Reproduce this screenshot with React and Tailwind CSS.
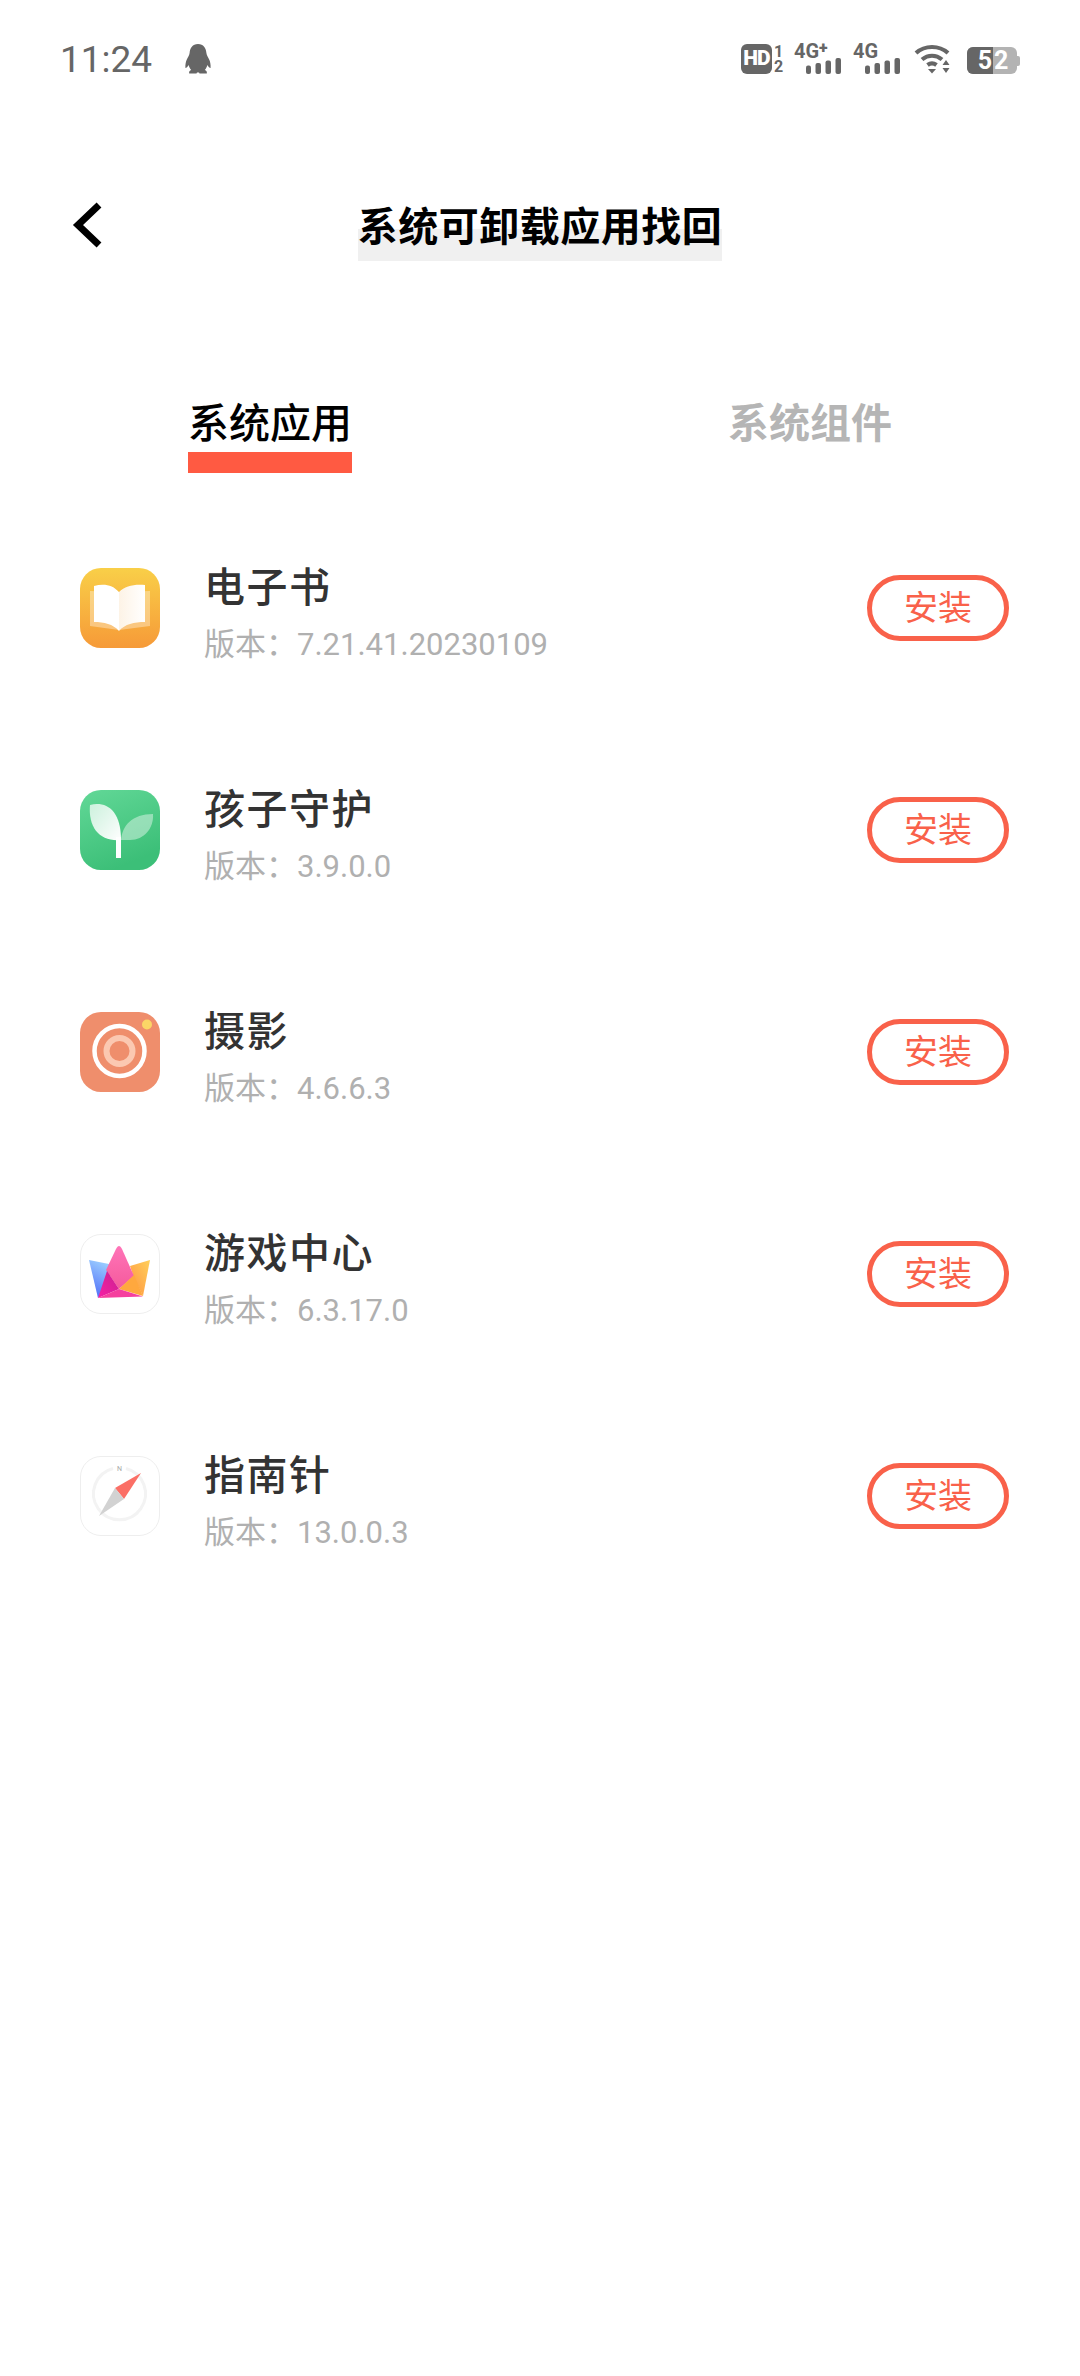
const apps = [
  { name: "电子书", version: "7.21.41.20230109", icon: BookIcon },
  { name: "孩子守护", version: "3.9.0.0", icon: SproutIcon },
  { name: "摄影", version: "4.6.6.3", icon: CameraIcon },
  { name: "游戏中心", version: "6.3.17.0", icon: CrownIcon },
  { name: "指南针", version: "13.0.0.3", icon: CompassIcon },
];

function BookIcon() {
  return (
    <svg viewBox="0 0 80 80" className="h-20 w-20">
      <defs>
        <linearGradient id="bookBg" x1="0" y1="0" x2="0" y2="1">
          <stop offset="0" stopColor="#f9cf48" />
          <stop offset="1" stopColor="#f69a38" />
        </linearGradient>
        <linearGradient id="bookPage" x1="0" y1="0" x2="1" y2="0">
          <stop offset="0" stopColor="#fdf3e6" />
          <stop offset="1" stopColor="#ffffff" />
        </linearGradient>
      </defs>
      <rect width="80" height="80" rx="21" fill="url(#bookBg)" />
      <path d="M10 23 L39 24 L39 62 L10 58 Z M70 23 L39 24 L39 62 L70 58 Z" fill="#fff" opacity=".35" />
      <path d="M14 18 C24 15 33 17 39 24 L39 63 C33 56 24 54 14 54 Z" fill="#fff" />
      <path d="M65 17 C54 16 45 18 39 24 L39 63 C45 56 54 54 65 54 Z" fill="url(#bookPage)" />
    </svg>
  );
}

function SproutIcon() {
  return (
    <svg viewBox="0 0 80 80" className="h-20 w-20">
      <defs>
        <linearGradient id="sproutBg" x1="0" y1="0" x2="0.4" y2="1">
          <stop offset="0" stopColor="#62d897" />
          <stop offset="1" stopColor="#3cbf78" />
        </linearGradient>
        <linearGradient id="sproutLeaf" x1="1" y1="1" x2="0" y2="0">
          <stop offset="0" stopColor="#fff" />
          <stop offset="1" stopColor="#fff" stopOpacity=".7" />
        </linearGradient>
      </defs>
      <rect width="80" height="80" rx="21" fill="url(#sproutBg)" />
      <path d="M41 50 C42 36 52 24 73 24 C74 38 64 50 50 50 Z" fill="#fff" opacity=".42" />
      <path d="M10 15 C26 11 41 20 41 50 C20 52 8 38 10 15 Z" fill="url(#sproutLeaf)" />
      <rect x="36" y="47" width="5" height="21" fill="#fff" />
    </svg>
  );
}

function CameraIcon() {
  return (
    <svg viewBox="0 0 80 80" className="h-20 w-20">
      <rect width="80" height="80" rx="21" fill="#ef8e6c" />
      <circle cx="39.5" cy="39" r="25" fill="none" stroke="#fff" strokeWidth="4.5" />
      <circle cx="39.5" cy="39" r="13" fill="none" stroke="#fbc8b1" strokeWidth="6" />
      <circle cx="67" cy="12.5" r="5" fill="#fbd666" />
    </svg>
  );
}

function CrownIcon() {
  return (
    <svg viewBox="0 0 80 80" className="h-20 w-20">
      <defs>
        <linearGradient id="crownBlue" x1="0.6" y1="0" x2="0.3" y2="1">
          <stop offset="0" stopColor="#9ccfff" />
          <stop offset="1" stopColor="#4f6cf8" />
        </linearGradient>
        <linearGradient id="crownOrange" x1="1" y1="0" x2="0" y2="1">
          <stop offset="0" stopColor="#ffd05a" />
          <stop offset="1" stopColor="#ff9340" />
        </linearGradient>
        <linearGradient id="crownPink" x1="0.5" y1="0" x2="0.5" y2="1">
          <stop offset="0" stopColor="#ff74b8" />
          <stop offset="1" stopColor="#f55a9c" />
        </linearGradient>
        <linearGradient id="crownMag" x1="0" y1="1" x2="1" y2="0">
          <stop offset="0" stopColor="#f81fa5" />
          <stop offset="1" stopColor="#c9218f" />
        </linearGradient>
      </defs>
      <rect x="0.5" y="0.5" width="79" height="79" rx="20.5" fill="#fff" stroke="#eeeeee" />
      <path d="M9 26 L29 30 L30 42 L18 64 Z" fill="url(#crownBlue)" />
      <path d="M70 26 L50 32 L54 44 L63 62 Z" fill="url(#crownOrange)" />
      <path d="M39 12 C40 12 41 13 42 15 L54 42 L39 55 L26 36 L36 15 C37 13 38 12 39 12 Z" fill="url(#crownPink)" />
      <path d="M27 37 L39 55 L18 64 Z" fill="url(#crownMag)" />
      <path d="M54 41 L63 62 L39 55 Z" fill="#ffa83e" />
      <path d="M18 64 L39 55 L63 62.5 Z" fill="#f5409e" />
    </svg>
  );
}

function CompassIcon() {
  return (
    <svg viewBox="0 0 80 80" className="h-20 w-20">
      <rect x="0.5" y="0.5" width="79" height="79" rx="20.5" fill="#fff" stroke="#eeeeee" />
      <path d="M33 12.5 A26 26 0 1 0 46 12.5" fill="none" stroke="#f3f3f3" strokeWidth="3" />
      <text x="39.5" y="15" textAnchor="middle" fontSize="7" fill="#a8a8a8" fontFamily="Roboto">N</text>
      <path d="M61 17 L35 32 L44 43 Z" fill="#fb6f66" />
      <path d="M35 32 L44 43 L19 60 Z" fill="#d2d2d2" />
    </svg>
  );
}

function Penguin() {
  return (
    <svg viewBox="0 0 26 30" className="h-[30px] w-[26px]" fill="#666">
      <path d="M13 0 C7.5 0 5 4.2 4.6 9 C4.4 11.5 2.6 13.5 1.6 16 C0.8 18 0.2 20.5 0.4 24 C1.4 24 2.6 22.8 3.6 21 C4.2 23 5 24.8 6.2 26 C4.6 26.6 3.8 27.6 4.2 29.4 L11.5 29.4 L12 28.4 L14 28.4 L14.5 29.4 L21.8 29.4 C22.2 27.6 21.4 26.6 19.8 26 C21 24.8 21.8 23 22.4 21 C23.4 22.8 24.6 24 25.6 24 C25.8 20.5 25.2 18 24.4 16 C23.4 13.5 21.6 11.5 21.4 9 C21 4.2 18.5 0 13 0 Z" />
    </svg>
  );
}

function Bars() {
  return (
    <svg viewBox="0 0 35 16" className="h-4 w-[35px]" fill="#666">
      <rect x="0" y="7.5" width="5" height="8.5" rx="2" />
      <rect x="9.5" y="5" width="5.5" height="11" rx="2" />
      <rect x="19.5" y="2.5" width="5.5" height="13.5" rx="2" />
      <rect x="29.5" y="0" width="5.5" height="16" rx="2" />
    </svg>
  );
}

function Signal({ label, plus }) {
  return (
    <div className="flex w-[47px] flex-col">
      <div className="flex h-[15px] text-[20px] leading-[15px] font-bold whitespace-nowrap text-[#666]">
        {label}
        {plus && <span className="mt-[-2px] text-[16px] leading-[12px] font-black">+</span>}
      </div>
      <div className="mt-[-1px] flex justify-end">
        <Bars />
      </div>
    </div>
  );
}

function Wifi() {
  return (
    <svg viewBox="0 0 38 30" className="h-[30px] w-[38px]" fill="none" stroke="#666" strokeWidth="4.2">
      <path d="M2 9 C11 1 25 1 34 9" />
      <path d="M8 15.5 C14 10.5 22 10.5 28 15.5" />
      <path d="M13.5 21 C16.5 18.8 19.5 18.8 22.5 21" />
      <path d="M14 25 L18 29.5 L22 25 Z" fill="#666" stroke="none" />
      <path d="M32 16 L28.5 21 L35.5 21 Z M28.5 24 L35.5 24 L32 29 Z" fill="#666" stroke="none" />
    </svg>
  );
}

function StatusBar() {
  return (
    <div className="flex h-[80px] items-center pt-[38px] pr-[60px] pl-[60px] text-[#666]">
      <span className="text-[37px] leading-none">11:24</span>
      <div className="ml-[33px] flex">
        <Penguin />
      </div>
      <div className="ml-auto flex items-end">
        <div className="flex h-[30px] w-[31px] items-center justify-center rounded-[6px] bg-[#666] text-[21px] font-black tracking-[-1px] text-white">
          HD
        </div>
        <div className="ml-[1px] flex w-[11px] flex-col text-center text-[16px] leading-[15px] font-bold">
          <span>1</span>
          <span>2</span>
        </div>
        <div className="ml-[10px]">
          <Signal label="4G" plus />
        </div>
        <div className="ml-[12px]">
          <Signal label="4G" />
        </div>
        <div className="ml-[14px]">
          <Wifi />
        </div>
        <div className="ml-[15px] flex items-center">
          <div className="flex h-[27px] w-[50px] rounded-[6px] bg-[#b3b3b3] text-[25px] leading-[27px] font-bold text-white">
            <span className="w-[26px] rounded-l-[6px] bg-[#666] pr-[1px] text-right">5</span>
            <span className="pl-[1px]">2</span>
          </div>
          <div className="h-[10px] w-[3px] rounded-r-[2px] bg-[#b3b3b3]" />
        </div>
      </div>
    </div>
  );
}

function AppRow({ app }) {
  const Icon = app.icon;
  return (
    <div className="flex h-[222px] items-center pr-[71px] pl-[80px]">
      <Icon />
      <div className="ml-[44px] flex flex-col pt-[9px]">
        <div className="text-[41px] leading-[50px] font-medium tracking-[1.5px] text-[#333]">{app.name}</div>
        <div className="mt-[14px] text-[31px] leading-[36px] text-[#b0b0b0]">版本：{app.version}</div>
      </div>
      <button className="ml-auto h-[66px] w-[142px] rounded-full border-[5px] border-[#f9614a] text-[34px] leading-none text-[#f9614a]">
        安装
      </button>
    </div>
  );
}

export default function App() {
  return (
    <div className="min-h-[2376px] bg-white font-['Roboto','Noto_Sans_CJK_SC',sans-serif]">
      <StatusBar />

      <div className="relative mt-[115px] flex h-[66px] justify-center">
        <svg viewBox="0 0 30 46" className="absolute top-[7px] left-[72px] h-[46px] w-[30px]" fill="none" stroke="#000" strokeWidth="7">
          <path d="M27 3 L6 23 L27 43" />
        </svg>
        <h1 className="bg-[linear-gradient(to_bottom,transparent_34px,#f0f0f0_34px)] text-[40px] leading-[66px] font-bold tracking-[0.5px] text-black">
          系统可卸载应用找回
        </h1>
      </div>

      <div className="mt-[136px] flex">
        <div className="flex w-[540px] justify-center">
          <div className="flex flex-col items-center">
            <span className="text-[41px] leading-[55px] font-medium text-black">系统应用</span>
            <div className="h-[21px] w-[164px] bg-[#ff5a42]" />
          </div>
        </div>
        <div className="flex w-[540px] justify-center">
          <span className="text-[41px] leading-[55px] font-bold text-[#b5b5b5]">系统组件</span>
        </div>
      </div>

      <div className="mt-[24px]">
        {apps.map((app) => (
          <AppRow key={app.name} app={app} />
        ))}
      </div>
    </div>
  );
}
